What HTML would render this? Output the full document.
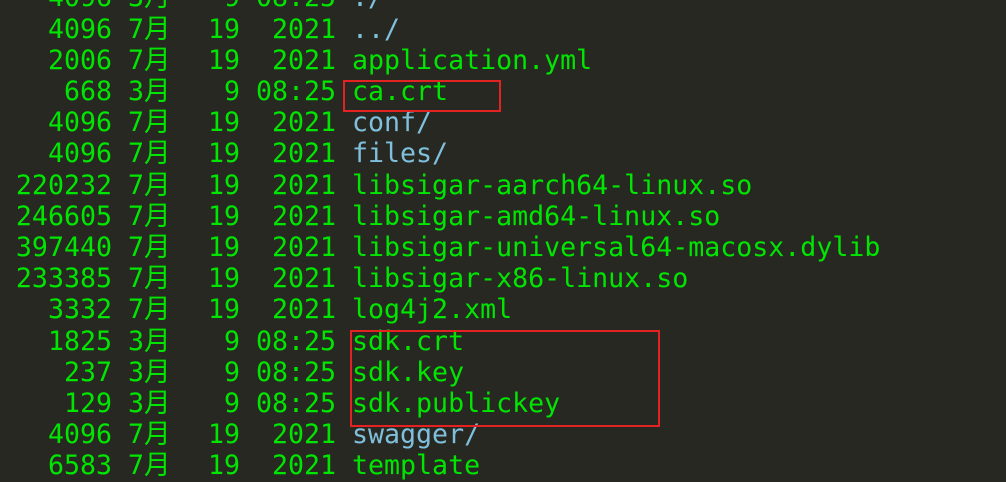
<!DOCTYPE html>
<html><head><meta charset="utf-8"><style>
html,body{margin:0;padding:0;}
body{width:1006px;height:478px;background:#282823;overflow:hidden;position:relative;
font-family:"DejaVu Sans Mono","Liberation Mono","Noto Sans CJK SC",monospace;font-size:26.6px;color:#00e600;}
.w{position:absolute;left:0;top:1px;width:1006px;height:478px;}
.r{position:absolute;left:0;width:1006px;height:31.2px;line-height:31.2px;white-space:pre;}
.r span{position:absolute;top:0;}
.s{right:calc(1006px - 112px);text-align:right;}
.m{left:128px;}
.d{right:calc(1006px - 240px);}
.t{right:calc(1006px - 336px);}
.n{left:352px;}
.b{color:#7fc0dc;}
.box{position:absolute;border:2px solid #e42222;box-sizing:border-box;}
</style></head><body>
<div class="w">
<div class="r" style="top:-18.6px"><span class="s">4096</span><span class="m">3月</span><span class="d">9</span><span class="t">08:25</span><span class="n b">./</span></div>
<div class="r" style="top:12.6px"><span class="s">4096</span><span class="m">7月</span><span class="d">19</span><span class="t">2021</span><span class="n b">../</span></div>
<div class="r" style="top:43.8px"><span class="s">2006</span><span class="m">7月</span><span class="d">19</span><span class="t">2021</span><span class="n">application.yml</span></div>
<div class="r" style="top:75px"><span class="s">668</span><span class="m">3月</span><span class="d">9</span><span class="t">08:25</span><span class="n">ca.crt</span></div>
<div class="r" style="top:106.2px"><span class="s">4096</span><span class="m">7月</span><span class="d">19</span><span class="t">2021</span><span class="n b">conf/</span></div>
<div class="r" style="top:137.4px"><span class="s">4096</span><span class="m">7月</span><span class="d">19</span><span class="t">2021</span><span class="n b">files/</span></div>
<div class="r" style="top:168.6px"><span class="s">220232</span><span class="m">7月</span><span class="d">19</span><span class="t">2021</span><span class="n">libsigar-aarch64-linux.so</span></div>
<div class="r" style="top:199.8px"><span class="s">246605</span><span class="m">7月</span><span class="d">19</span><span class="t">2021</span><span class="n">libsigar-amd64-linux.so</span></div>
<div class="r" style="top:231px"><span class="s">397440</span><span class="m">7月</span><span class="d">19</span><span class="t">2021</span><span class="n">libsigar-universal64-macosx.dylib</span></div>
<div class="r" style="top:262.2px"><span class="s">233385</span><span class="m">7月</span><span class="d">19</span><span class="t">2021</span><span class="n">libsigar-x86-linux.so</span></div>
<div class="r" style="top:293.4px"><span class="s">3332</span><span class="m">7月</span><span class="d">19</span><span class="t">2021</span><span class="n">log4j2.xml</span></div>
<div class="r" style="top:324.6px"><span class="s">1825</span><span class="m">3月</span><span class="d">9</span><span class="t">08:25</span><span class="n">sdk.crt</span></div>
<div class="r" style="top:355.8px"><span class="s">237</span><span class="m">3月</span><span class="d">9</span><span class="t">08:25</span><span class="n">sdk.key</span></div>
<div class="r" style="top:387px"><span class="s">129</span><span class="m">3月</span><span class="d">9</span><span class="t">08:25</span><span class="n">sdk.publickey</span></div>
<div class="r" style="top:418.2px"><span class="s">4096</span><span class="m">7月</span><span class="d">19</span><span class="t">2021</span><span class="n b">swagger/</span></div>
<div class="r" style="top:449.4px"><span class="s">6583</span><span class="m">7月</span><span class="d">19</span><span class="t">2021</span><span class="n">template</span></div>
</div>
<div class="box" style="left:343px;top:80px;width:158px;height:32px"></div>
<div class="box" style="left:350px;top:330px;width:310px;height:97px"></div>
</body></html>
